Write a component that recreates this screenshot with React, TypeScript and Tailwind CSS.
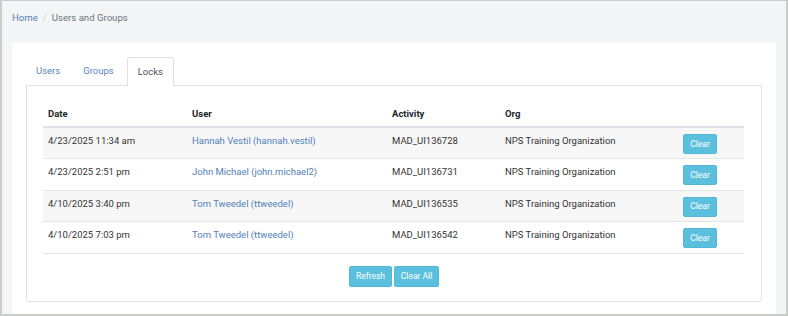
import React from 'react';

interface Lock {
  date: string;
  user: string;
  activity: string;
  org: string;
}

const LOCKS: Lock[] = [
  { date: '4/23/2025 11:34 am', user: 'Hannah Vestil (hannah.vestil)', activity: 'MAD_UI136728', org: 'NPS Training Organization' },
  { date: '4/23/2025 2:51 pm', user: 'John Michael (john.michael2)', activity: 'MAD_UI136731', org: 'NPS Training Organization' },
  { date: '4/10/2025 3:40 pm', user: 'Tom Tweedel (ttweedel)', activity: 'MAD_UI136535', org: 'NPS Training Organization' },
  { date: '4/10/2025 7:03 pm', user: 'Tom Tweedel (ttweedel)', activity: 'MAD_UI136542', org: 'NPS Training Organization' }
];

const TABS = ['Users', 'Groups', 'Locks'];

export default function App() {
  return (
    <div
      className="w-[788px] h-[316px] overflow-hidden bg-[#f4f5f7] border-2 border-t border-[#c9cdc9] text-[9.5px] text-[#333] flex flex-col"
      style={{ fontFamily: 'Roboto, "Liberation Sans", sans-serif' }}
    >
      {/* Breadcrumb */}
      <div className="flex items-center h-[33px] pl-[10px] pt-[1px] text-[9.6px]">
        <a className="text-[#4f7fb8]">Home</a>
        <span className="mx-[5px] text-[#c4c8cc]">/</span>
        <span className="text-[#6c757d]">Users and Groups</span>
      </div>

      <div className="mx-[10px] mt-[9px] flex-1 bg-white px-[14px] pt-[14px]">
        {/* Tabs */}
        <div className="flex h-[28px] text-[9.5px]">
          {TABS.map((t) => (
            <div
              key={t}
              className={
                t === 'Locks'
                  ? 'px-[10px] flex items-center border border-b-0 border-[#dee2e6] rounded-t-[3px] bg-white text-[#495057] relative -mb-px z-10'
                  : 'px-[10px] mr-[3px] flex items-center text-[#5a86bd]'
              }
            >
              {t}
            </div>
          ))}
        </div>

        {/* Tab content */}
        <div className="border border-[#dee2e6] rounded-b-[3px] h-[217px] px-[16px] pt-[14px]">
          <table className="w-[701px] table-fixed border-collapse">
            <colgroup>
              <col className="w-[144px]" />
              <col className="w-[200px]" />
              <col className="w-[113px]" />
              <col className="w-[178px]" />
              <col className="w-[66px]" />
            </colgroup>
            <thead>
              <tr className="h-[27px] border-b-2 border-[#dee2e6] text-left">
                <th className="px-[5px] pt-[3px] font-bold text-[#212529]">Date</th>
                <th className="px-[5px] pt-[3px] font-bold text-[#212529]">User</th>
                <th className="px-[5px] pt-[3px] font-bold text-[#212529]">Activity</th>
                <th className="px-[5px] pt-[3px] font-bold text-[#212529]">Org</th>
                <th />
              </tr>
            </thead>
            <tbody>
              {LOCKS.map((l, i) => (
                <tr
                  key={l.activity}
                  className={`h-[31.5px] border-b border-[#e4e6e8] align-top ${i % 2 === 0 ? 'bg-[#f7f7f7]' : 'bg-white'}`}
                >
                  <td className="px-[5px] pt-[6px]">{l.date}</td>
                  <td className="px-[5px] pt-[6px] text-[#4f7fb8]">{l.user}</td>
                  <td className="px-[5px] pt-[6px]">{l.activity}</td>
                  <td className="px-[5px] pt-[6px]">{l.org}</td>
                  <td className="px-[5px] pt-[6px]">
                    <button className="w-[34px] h-[20px] rounded-[2px] bg-[#5bc0de] text-white text-[8.5px] border border-[#52b8d6]">
                      Clear
                    </button>
                  </td>
                </tr>
              ))}
            </tbody>
          </table>

          <div className="flex justify-center gap-[2px] mt-[12px]">
            <button className="w-[43px] h-[21px] rounded-[2px] bg-[#5bc0de] border border-[#52b8d6] text-white text-[8.5px]">
              Refresh
            </button>
            <button className="w-[45px] h-[21px] rounded-[2px] bg-[#5bc0de] border border-[#52b8d6] text-white text-[8.5px]">
              Clear All
            </button>
          </div>
        </div>
      </div>
    </div>
  );
}
